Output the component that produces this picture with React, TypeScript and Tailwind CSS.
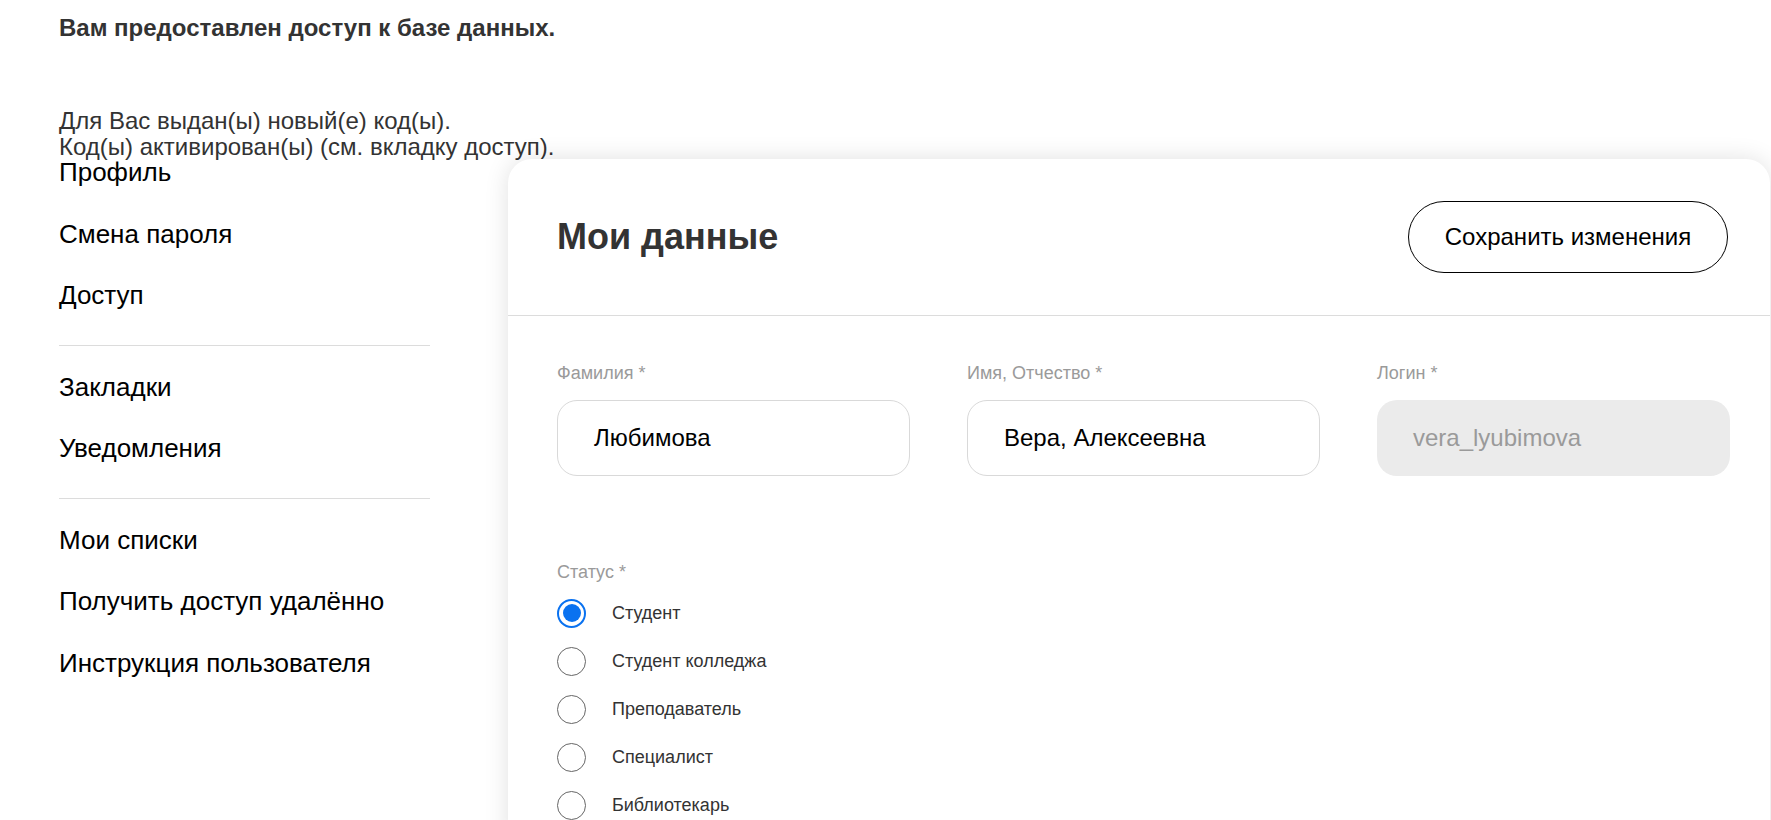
import React from "react";

const navGroups = [
  ["Профиль", "Смена пароля", "Доступ"],
  ["Закладки", "Уведомления"],
  ["Мои списки", "Получить доступ удалённо", "Инструкция пользователя"],
];

const statuses = ["Студент", "Студент колледжа", "Преподаватель", "Специалист", "Библиотекарь"];

function Field({ label, value, disabled }: { label: string; value: string; disabled?: boolean }) {
  return (
    <div className="flex flex-col">
      <div className="text-[18px] leading-[20px] text-[#9a9a9a] mb-[17px]">{label}</div>
      <div
        className={
          disabled
            ? "h-[76px] rounded-[20px] bg-[#ebebeb] flex items-center pl-[36px] text-[24px] text-[#9a9a9a]"
            : "h-[76px] rounded-[20px] border border-[#d9d9d9] bg-white flex items-center pl-[36px] text-[24px] text-black"
        }
      >
        {value}
      </div>
    </div>
  );
}

export default function App() {
  return (
    <div className="w-[1771px] h-[820px] overflow-hidden bg-white font-['Liberation_Sans',Arial,sans-serif]">
      <div className="h-[150px] pl-[59px] pt-[15px]">
        <div className="text-[24px] leading-[26px] font-bold text-[#333]">Вам предоставлен доступ к базе данных.</div>
        <div className="mt-[67px] text-[24px] leading-[26px] text-[#333]">
          <div>Для Вас выдан(ы) новый(е) код(ы).</div>
          <div>Код(ы) активирован(ы) (см. вкладку доступ).</div>
        </div>
      </div>
      <div className="flex">
        <nav className="w-[508px] shrink-0 pl-[59px] pt-[7px]">
          {navGroups.map((g, gi) => (
            <div key={gi}>
              {gi > 0 && <div className="w-[371px] h-px bg-[#dcdcdc] mt-[3px] mb-[26px]" />}
              {g.map((item) => (
                <div key={item} className="h-[61.5px] flex items-start text-[26px] leading-[30px] text-black">
                  {item}
                </div>
              ))}
            </div>
          ))}
        </nav>
        <div className="mt-[9px] w-[1262px] shrink-0 rounded-[24px] bg-white shadow-[0_0_24px_rgba(0,0,0,0.12)] min-h-[700px]">
          <div className="h-[157px] flex items-center justify-between pl-[49px] pr-[42px] border-b border-[#dcdcdc]">
            <div className="text-[36px] font-bold text-[#333]">Мои данные</div>
            <div className="h-[72px] w-[320px] rounded-full border border-black flex items-center justify-center text-[24px] text-black">
              Сохранить изменения
            </div>
          </div>
          <div className="pl-[49px] pr-[42px] pt-[47px]">
            <div className="grid grid-cols-[353px_353px_353px] gap-x-[57px]">
              <Field label="Фамилия *" value="Любимова" />
              <Field label="Имя, Отчество *" value="Вера, Алексеевна" />
              <Field label="Логин *" value="vera_lyubimova" disabled />
            </div>
            <div className="mt-[86px] text-[18px] leading-[20px] text-[#9a9a9a]">Статус *</div>
            <div className="mt-[7px] flex flex-col">
              {statuses.map((s, i) => (
                <div key={s} className="h-[48px] flex items-center">
                  {i === 0 ? (
                    <div className="w-[29px] h-[29px] rounded-full border-[2px] border-[#0a72f0] flex items-center justify-center">
                      <div className="w-[18px] h-[18px] rounded-full bg-[#0a72f0]" />
                    </div>
                  ) : (
                    <div className="w-[29px] h-[29px] rounded-full border-[1.5px] border-[#666]" />
                  )}
                  <span className="ml-[26px] text-[18px] text-[#333]">{s}</span>
                </div>
              ))}
            </div>
          </div>
        </div>
      </div>
    </div>
  );
}
